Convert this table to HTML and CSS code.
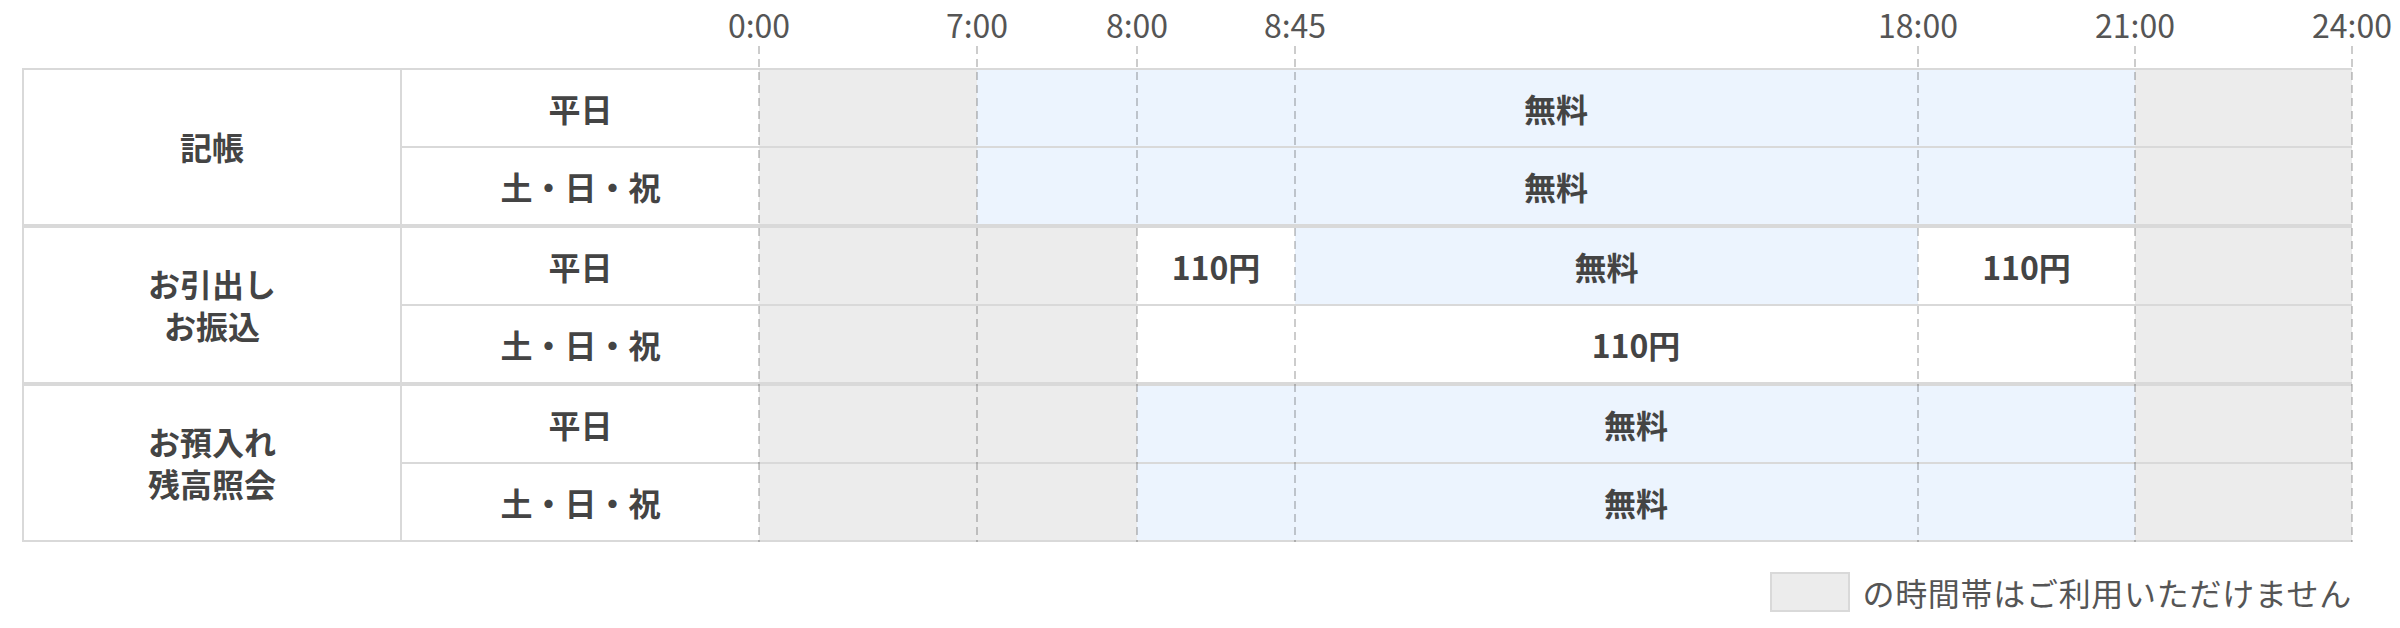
FILE: index.html
```html
<!DOCTYPE html>
<html lang="ja">
<head>
<meta charset="utf-8">
<title>ATM利用時間</title>
<link rel="stylesheet" href="styles.css">
</head>
<body>
<div class="page">
  <div class="board">
    <div class="axis"></div>

    <div class="group">
      <div class="svc">記帳</div>
      <div class="days">
        <div class="day">平日</div>
        <div class="day">土・日・祝</div>
      </div>
      <div class="lanes">
        <div class="lane">
          <div class="seg off h0-7"></div>
          <div class="seg free h7-21">無料</div>
          <div class="seg off h21-24"></div>
        </div>
        <div class="lane">
          <div class="seg off h0-7"></div>
          <div class="seg free h7-21">無料</div>
          <div class="seg off h21-24"></div>
        </div>
      </div>
    </div>

    <div class="group">
      <div class="svc">お引出し<br>お振込</div>
      <div class="days">
        <div class="day">平日</div>
        <div class="day">土・日・祝</div>
      </div>
      <div class="lanes">
        <div class="lane">
          <div class="seg off h0-8"></div>
          <div class="seg paid h8-845">110円</div>
          <div class="seg free h845-18">無料</div>
          <div class="seg paid h18-21">110円</div>
          <div class="seg off h21-24"></div>
        </div>
        <div class="lane">
          <div class="seg off h0-8"></div>
          <div class="seg paid h8-21">110円</div>
          <div class="seg off h21-24"></div>
        </div>
      </div>
    </div>

    <div class="group">
      <div class="svc">お預入れ<br>残高照会</div>
      <div class="days">
        <div class="day">平日</div>
        <div class="day">土・日・祝</div>
      </div>
      <div class="lanes">
        <div class="lane">
          <div class="seg off h0-8"></div>
          <div class="seg free h8-21">無料</div>
          <div class="seg off h21-24"></div>
        </div>
        <div class="lane">
          <div class="seg off h0-8"></div>
          <div class="seg free h8-21">無料</div>
          <div class="seg off h21-24"></div>
        </div>
      </div>
    </div>

    <div class="ticks">
      <div class="tick" style="left:0px"><span class="tick-label">0:00</span><span class="tick-line"></span></div>
      <div class="tick" style="left:218px"><span class="tick-label">7:00</span><span class="tick-line"></span></div>
      <div class="tick" style="left:378px"><span class="tick-label">8:00</span><span class="tick-line"></span></div>
      <div class="tick" style="left:536px"><span class="tick-label">8:45</span><span class="tick-line"></span></div>
      <div class="tick" style="left:1159px"><span class="tick-label">18:00</span><span class="tick-line"></span></div>
      <div class="tick" style="left:1376px"><span class="tick-label">21:00</span><span class="tick-line"></span></div>
      <div class="tick" style="left:1593px"><span class="tick-label">24:00</span><span class="tick-line"></span></div>
    </div>
  </div>

  <div class="legend">
    <span class="swatch"></span>
    <span class="legend-text">の時間帯はご利用いただけません</span>
  </div>
</div>
</body>
</html>
```

FILE: styles.css
```css
html, body {
  margin: 0;
  padding: 0;
  background: #ffffff;
}

body {
  font-family: "Noto Sans CJK JP", "Noto Sans", sans-serif;
  font-size: 32px;
  color: #444444;
}

.page {
  width: 2330px;
  margin-left: 22px;
}

.board {
  position: relative;
}

.axis {
  height: 68px;
}

.group {
  display: grid;
  grid-template-columns: 378px 357px 1593px;
  border: 2px solid #d9d9d9;
  border-right: 0;
  font-weight: 700;
}

.svc {
  border-right: 2px solid #d9d9d9;
  display: flex;
  align-items: center;
  justify-content: center;
  text-align: center;
  line-height: 1.3;
}

.days,
.lanes {
  display: flex;
  flex-direction: column;
}

.day,
.lane {
  height: 76px;
}

.day:first-child,
.lane:first-child {
  height: 78px;
  border-bottom: 2px solid #d9d9d9;
  box-sizing: border-box;
}

.day {
  display: flex;
  align-items: center;
  justify-content: center;
}

.lane {
  display: grid;
  grid-template-columns: 218fr 160fr 158fr 623fr 217fr 217fr;
}

.seg {
  display: flex;
  align-items: center;
  justify-content: center;
}

.off { background: #ececec; }
.free { background: #ecf4fe; }
.paid { background: #ffffff; }

.h0-7 { grid-column: 1 / 2; }
.h0-8 { grid-column: 1 / 3; }
.h7-21 { grid-column: 2 / 6; }
.h8-845 { grid-column: 3 / 4; }
.h845-18 { grid-column: 4 / 5; }
.h18-21 { grid-column: 5 / 6; }
.h8-21 { grid-column: 3 / 6; }
.h21-24 { grid-column: 6 / 7; }

.ticks {
  position: absolute;
  top: 0;
  bottom: 0;
  left: 737px;
  width: 1593px;
  pointer-events: none;
}

.tick {
  position: absolute;
  top: 0;
  bottom: 0;
  width: 0;
}

.tick-label {
  position: absolute;
  top: 1px;
  left: 0;
  transform: translateX(-50%);
  line-height: 46px;
  color: #555555;
  font-weight: 400;
  white-space: nowrap;
}

.tick-line {
  position: absolute;
  top: 46px;
  bottom: 0;
  left: -1px;
  width: 2px;
  background: repeating-linear-gradient(to bottom, rgba(0, 0, 0, 0.2) 0 8px, transparent 8px 13px);
}

.legend {
  display: flex;
  justify-content: flex-end;
  align-items: center;
  gap: 12px;
  margin-top: 30px;
}

.swatch {
  width: 80px;
  height: 40px;
  box-sizing: border-box;
  border: 2px solid #d9d9d9;
  background: #ececec;
}

.legend-text {
  color: #555555;
  line-height: 40px;
  letter-spacing: 0.7px;
}
```
